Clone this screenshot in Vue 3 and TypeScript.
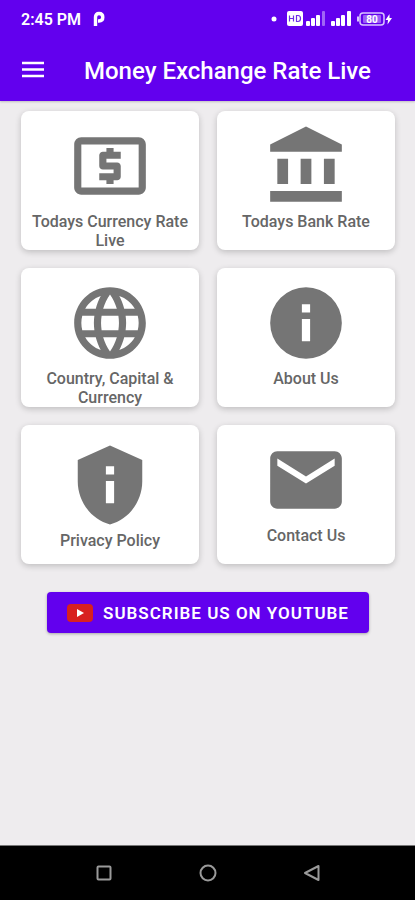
<script setup lang="ts">
interface Tile {
  label: string
  icon: string
  lowered?: boolean
}

const tiles: Tile[] = [
  {
    label: 'Todays Currency Rate Live',
    icon: 'M11 17h2v-1h1c.55 0 1-.45 1-1v-3c0-.55-.45-1-1-1h-3v-1h4V8h-2V7h-2v1h-1c-.55 0-1 .45-1 1v3c0 .55.45 1 1 1h3v1H9v2h2v1zm9-13H4c-1.11 0-1.99.89-1.99 2L2 18c0 1.11.89 2 2 2h16c1.11 0 2-.89 2-2V6c0-1.11-.89-2-2-2zm0 14H4V6h16v12z',
  },
  {
    label: 'Todays Bank Rate',
    icon: 'M4 10h3v7H4zM10.5 10h3v7h-3zM2 19h20v3H2zM17 10h3v7h-3zM12 1L2 6v2h20V6z',
  },
  {
    label: 'Country, Capital & Currency',
    icon: 'M11.99 2C6.47 2 2 6.48 2 12s4.47 10 9.99 10C17.52 22 22 17.52 22 12S17.52 2 11.99 2zm6.93 6h-2.95c-.32-1.25-.78-2.45-1.38-3.56 1.84.63 3.37 1.91 4.33 3.56zM12 4.04c.83 1.2 1.48 2.53 1.91 3.96h-3.82c.43-1.43 1.08-2.76 1.91-3.96zM4.26 14C4.1 13.36 4 12.69 4 12s.1-1.36.26-2h3.38c-.08.66-.14 1.32-.14 2 0 .68.06 1.34.14 2H4.26zm.82 2h2.95c.32 1.25.78 2.45 1.38 3.56-1.84-.63-3.37-1.9-4.33-3.56zm2.95-8H5.08c.96-1.66 2.49-2.93 4.33-3.56C8.81 5.55 8.35 6.75 8.03 8zM12 19.96c-.83-1.2-1.48-2.53-1.91-3.96h3.82c-.43 1.43-1.08 2.76-1.91 3.96zM14.34 14H9.66c-.09-.66-.16-1.32-.16-2 0-.68.07-1.35.16-2h4.68c.09.65.16 1.32.16 2 0 .68-.07 1.34-.16 2zm.25 5.56c.6-1.11 1.06-2.31 1.38-3.56h2.95c-.96 1.65-2.49 2.93-4.33 3.56zM16.36 14c.08-.66.14-1.32.14-2 0-.68-.06-1.34-.14-2h3.38c.16.64.26 1.31.26 2s-.1 1.36-.26 2h-3.38z',
  },
  {
    label: 'About Us',
    icon: 'M12 2a10 10 0 1 0 0 20a10 10 0 1 0 0-20zM10.85 6.8h2.3v2.3h-2.3zM10.85 10.9h2.3v6.2h-2.3z',
  },
  {
    label: 'Privacy Policy',
    icon: 'M12 1L3 5v6c0 5.55 3.84 10.74 9 12c5.16-1.26 9-6.45 9-12V5zM10.85 6.8h2.3v2.3h-2.3zM10.85 10.9h2.3v6.2h-2.3z',
    lowered: true,
  },
  {
    label: 'Contact Us',
    icon: 'M20 4H4c-1.1 0-1.99.9-1.99 2L2 18c0 1.1.9 2 2 2h16c1.1 0 2-.9 2-2V6c0-1.1-.9-2-2-2zm0 4l-8 5-8-5V6l8 5 8-5v2z',
  },
]
</script>

<template>
  <div class="screen">
    <header class="top">
      <div class="status">
        <span class="time">2:45 PM</span>
        <svg class="app-mark" width="12" height="16" viewBox="0 0 12 16" aria-hidden="true">
          <path d="M2.5 15V6Q2.5 2.5 6 2.5Q9.8 2.5 9.8 6.3Q9.8 10 6 10H5" fill="none" stroke="#fff" stroke-width="3.4" stroke-linejoin="round" />
        </svg>
        <svg class="signals" width="122" height="18" viewBox="0 0 122 18" aria-hidden="true">
          <circle cx="3" cy="9" r="2.5" fill="#fff" />
          <rect x="16" y="1" width="16" height="15" rx="2" fill="#fff" />
          <path d="M18.5 5.5v6M22.5 5.5v6M18.5 8.5h4M25.5 5.5h1.5q2.5 0 2.5 3t-2.5 3h-1.5z" fill="none" stroke="#6f2ce6" stroke-width="1.2" />
          <g fill="#fff">
            <rect x="35" y="11" width="4" height="5" rx="1" />
            <rect x="40" y="8" width="4" height="8" rx="1" />
            <rect x="45" y="5" width="4" height="11" rx="1" />
            <rect x="51" y="1" width="3" height="15" rx="1" opacity=".4" />
            <rect x="60" y="11" width="4" height="5" rx="1" />
            <rect x="65" y="8" width="4" height="8" rx="1" />
            <rect x="70" y="5" width="4" height="11" rx="1" />
            <rect x="76" y="1" width="4" height="15" rx="1" />
            <path d="M118.5 4l-4 6h2.5l-.5 4.5 4.5-6.5h-2.5z" />
          </g>
          <rect x="89" y="3" width="24" height="12" rx="3" fill="none" stroke="#d9c4ff" stroke-width="1.5" />
          <path d="M87 6.5v5" stroke="#d9c4ff" stroke-width="2" />
          <rect x="92" y="5" width="18" height="8" rx="1" fill="#9a5cf5" />
          <text x="101" y="12.5" text-anchor="middle" class="battery">80</text>
        </svg>
      </div>
      <div class="bar">
        <button class="menu" type="button" aria-label="Menu">
          <svg width="24" height="18" viewBox="0 0 24 18" aria-hidden="true">
            <path d="M1 2h22M1 8.5h22M1 15h22" stroke="#fff" stroke-width="2.6" />
          </svg>
        </button>
        <h1>Money Exchange Rate Live</h1>
      </div>
    </header>

    <main>
      <nav class="tiles">
        <a v-for="tile in tiles" :key="tile.label" href="#" class="tile" :class="{ lowered: tile.lowered }">
          <svg class="icon" viewBox="0 0 24 24" aria-hidden="true">
            <path :d="tile.icon" fill="#757575" fill-rule="evenodd" />
          </svg>
          <span class="label">{{ tile.label }}</span>
        </a>
      </nav>

      <button class="subscribe" type="button">
        <svg width="26" height="18" viewBox="0 0 26 18" aria-hidden="true">
          <rect width="26" height="18" rx="4" fill="#d8201f" />
          <path d="M10 5v8l7-4z" fill="#fff" />
        </svg>
        <span>SUBSCRIBE US ON YOUTUBE</span>
      </button>
    </main>

    <footer class="system">
      <button type="button" aria-label="Recent apps">
        <svg width="18" height="18" viewBox="0 0 18 18"><rect x="2.5" y="2.5" width="13" height="13" rx="1" /></svg>
      </button>
      <button type="button" aria-label="Home">
        <svg width="18" height="18" viewBox="0 0 18 18"><circle cx="9" cy="9" r="7.5" /></svg>
      </button>
      <button type="button" aria-label="Back">
        <svg width="18" height="18" viewBox="0 0 18 18"><path d="M15.5 2v14L2 9z" /></svg>
      </button>
    </footer>
  </div>
</template>

<style>
body {
  margin: 0;
  background: #eeecee;
}
</style>

<style scoped>
.screen {
  display: flex;
  flex-direction: column;
  min-height: 100vh;
  background: #eeecee;
  font-family: Roboto, "Liberation Sans", sans-serif;
}

button {
  padding: 0;
  border: 0;
  background: none;
  font: inherit;
  color: inherit;
}

svg {
  display: block;
}

.top {
  background: #6200ee;
  color: #fff;
  box-shadow: 0 1px 2px rgba(0, 0, 0, 0.2);
}

.status {
  display: flex;
  align-items: center;
  height: 38px;
  padding: 0 22px 0 21px;
}

.time {
  font-size: 16px;
  font-weight: 600;
}

.app-mark {
  margin-left: 12px;
}

.signals {
  margin-left: auto;
}

.battery {
  font-size: 10px;
  font-weight: 700;
  fill: #fff;
}

.bar {
  display: flex;
  align-items: center;
  gap: 39px;
  height: 63px;
  padding: 0 21px;
}

h1 {
  margin: 0;
  padding-top: 2px;
  font-size: 24px;
  line-height: 28px;
  font-weight: 500;
  white-space: nowrap;
}

main {
  flex: 1;
  display: flex;
  flex-direction: column;
  align-items: center;
  padding: 10px 20px 20px 21px;
}

.tiles {
  display: grid;
  grid-template-columns: 1fr 1fr;
  grid-auto-rows: 139px;
  gap: 18px;
  width: 100%;
}

.tile {
  display: flex;
  flex-direction: column;
  align-items: center;
  padding: 12px 8px 0;
  border-radius: 8px;
  background: #fff;
  box-shadow: 0 2px 6px rgba(0, 0, 0, 0.2);
  color: #666;
  text-decoration: none;
}

.tile.lowered {
  padding-top: 17px;
}

.icon {
  flex: none;
  width: 86px;
  height: 86px;
}

.label {
  margin-top: 3px;
  font-size: 16px;
  line-height: 19px;
  font-weight: 500;
  text-align: center;
}

.subscribe {
  display: flex;
  align-items: center;
  gap: 10px;
  height: 41px;
  margin-top: 28px;
  padding: 0 20px;
  border-radius: 4px;
  background: #6200ee;
  box-shadow: 0 1px 3px rgba(0, 0, 0, 0.3);
  color: #fff;
  font-size: 17px;
  font-weight: 600;
  letter-spacing: 1px;
  white-space: nowrap;
}

.system {
  display: flex;
  justify-content: center;
  gap: 86px;
  padding: 18px 0;
  border-top: 1px solid #777;
  background: #000;
}

.system svg {
  fill: none;
  stroke: #9a9a9a;
  stroke-width: 2;
  stroke-linejoin: round;
}
</style>
